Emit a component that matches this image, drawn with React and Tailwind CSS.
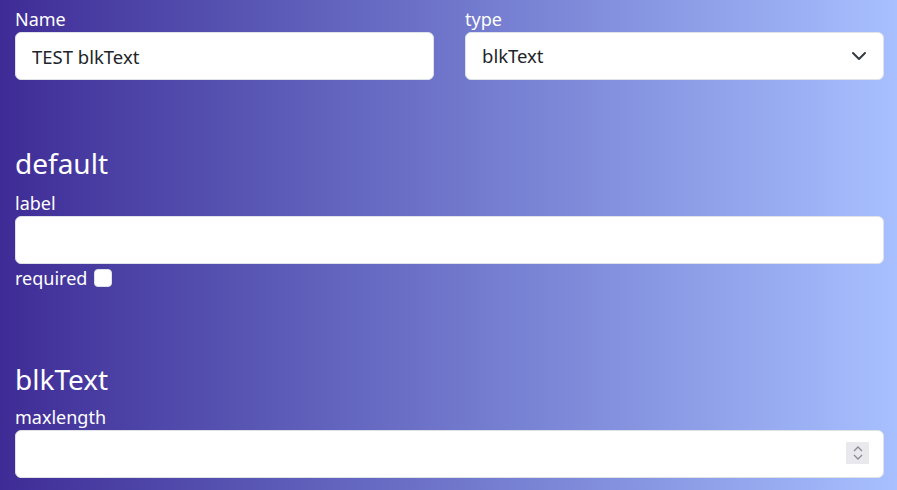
import React, { useState } from 'react';

const font = { fontFamily: '"Noto Sans", "Open Sans", sans-serif' };

function Field({ label, children }) {
  return (
    <div className="flex flex-col">
      <label className="block text-[18px] leading-[24px] text-white mb-[1px]">{label}</label>
      {children}
    </div>
  );
}

const inputCls =
  'block w-full h-[48px] px-4 text-[18.5px] text-[#212529] bg-white border border-[#dee2e6] rounded-[6px] outline-none';

function App() {
  const [name, setName] = useState('TEST blkText');
  const [type, setType] = useState('blkText');

  return (
    <div
      className="w-full min-h-[490px] bg-gradient-to-r from-[#3f2b96] to-[#a8c0ff] pl-[15px] pr-[13px] pt-[7px]"
      style={font}
    >
      <div className="grid grid-cols-2 gap-[31px]">
        <Field label="Name">
          <input className={inputCls} value={name} onChange={(e) => setName(e.target.value)} />
        </Field>
        <Field label="type">
          <div className="relative">
            <select
              className={inputCls + ' appearance-none pr-12'}
              value={type}
              onChange={(e) => setType(e.target.value)}
            >
              <option value="blkText">blkText</option>
              <option value="blkNumber">blkNumber</option>
            </select>
            <svg
              className="absolute right-[17px] top-[16px] pointer-events-none"
              width="16"
              height="16"
              viewBox="0 0 16 16"
              fill="none"
              stroke="#343a40"
              strokeWidth="2"
              strokeLinecap="round"
              strokeLinejoin="round"
            >
              <path d="m2 5 6 6 6-6" />
            </svg>
          </div>
        </Field>
      </div>

      <h3 className="text-[28px] leading-[34px] text-white mt-[66px] mb-[11px]">default</h3>
      <Field label="label">
        <input className={inputCls} />
      </Field>
      <div className="flex items-center gap-[7px] mt-[2px] text-white text-[18px] leading-[24px]">
        <span>required</span>
        <span className="inline-block w-[18px] h-[18px] bg-white border border-[#dee2e6] rounded-[4px]" />
      </div>

      <h3 className="text-[28px] leading-[34px] text-white mt-[72px] mb-[9px]">blkText</h3>
      <Field label="maxlength">
        <div className="relative">
          <input className={inputCls} />
          <div className="absolute right-[15px] top-[12px] w-[23px] h-[22px] bg-[#e9e9ed] flex flex-col items-center justify-center gap-[2px]">
            <svg width="10" height="6" viewBox="0 0 10 6" fill="none" stroke="#8a8a92" strokeWidth="1.3">
              <path d="M1 5 5 1l4 4" />
            </svg>
            <svg width="10" height="6" viewBox="0 0 10 6" fill="none" stroke="#8a8a92" strokeWidth="1.3">
              <path d="M1 1l4 4 4-4" />
            </svg>
          </div>
        </div>
      </Field>
    </div>
  );
}

export default App;
